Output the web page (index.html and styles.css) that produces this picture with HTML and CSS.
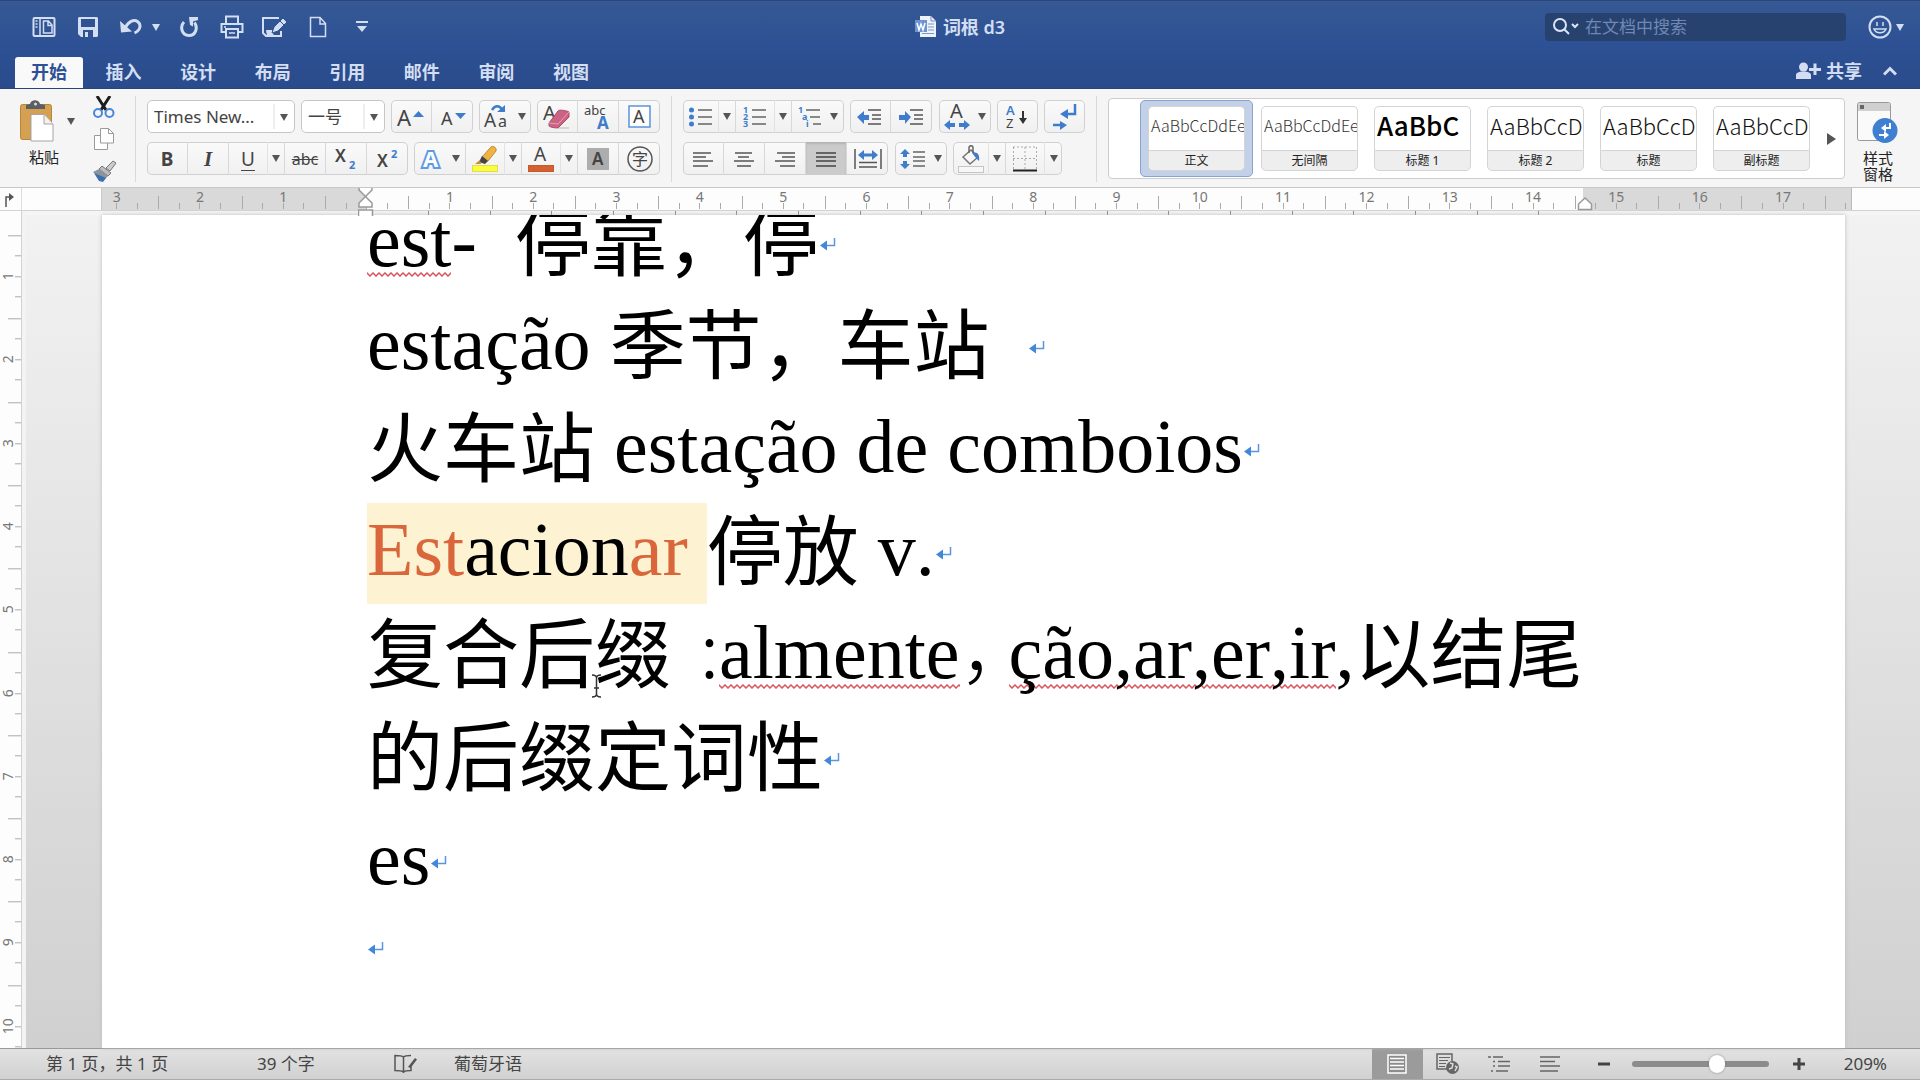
FILE: index.html
```html
<!DOCTYPE html>
<html lang="zh-CN">
<head>
<meta charset="utf-8">
<title>词根 d3</title>
<link rel="stylesheet" href="styles.css">
</head>
<body>
<svg class="defs" aria-hidden="true">
  <symbol id="dn" viewBox="0 0 8 7"><path d="M0 0h8L4 7z" fill="currentColor"/></symbol>
  <symbol id="mark" viewBox="0 0 16 14"><path d="M14.500 0V7.500H5" fill="none" stroke="#5a96de" stroke-width="1.500"/><path d="M0 7.500L7 2.500v10z" fill="#4188dc"/></symbol>
</svg>
<div class="app">
<header class="top">
  <div class="titlebar">
    <div class="quick">
      <button class="q" aria-label="侧边栏"><svg width="24" height="22" viewBox="0 0 24 22" fill="none" stroke="currentColor" stroke-width="2"><rect x="1.500" y="2" width="21" height="18" rx="1"/><path d="M8 2v18" stroke-width="1.500"/><path d="M3.500 5h2M3.500 8h2M3.500 11h2" stroke-width="1.500"/><path d="M11.500 5h5l3.500 4v8h-8.500zM16 5v4.500h4" stroke-width="1.500"/></svg></button>
      <button class="q" aria-label="保存"><svg width="22" height="22" viewBox="0 0 22 22"><path d="M2 1h18l1 1v18l-1 1H4l-3-3V2z" fill="currentColor"/><rect x="4" y="3" width="14" height="8" fill="#305292"/><rect x="6" y="14" width="10" height="7" fill="#305292"/><rect x="8" y="16" width="3" height="5" fill="currentColor"/></svg></button>
      <button class="q" aria-label="撤消"><svg width="22" height="20" viewBox="0 0 22 20" fill="none" stroke="currentColor" stroke-width="3"><path d="M0 4l1 11.500 11-1z" fill="currentColor" stroke="none"/><path d="M5 11C9 4 14 2 17.500 4.500s4 8-3 11.500"/></svg></button>
      <button class="q" aria-label="撤消选项"><svg width="8" height="7"><use href="#dn"/></svg></button>
      <button class="q" aria-label="重复"><svg width="19" height="22" viewBox="0 0 19 22" fill="none" stroke="currentColor" stroke-width="3"><path d="M4 6C0 10 1 19 9 19.500c7 0 9-8 5.500-13"/><path d="M9 1h9v3l-5 1.500v5L10 9z" fill="currentColor" stroke="none"/></svg></button>
      <button class="q" aria-label="打印"><svg width="24" height="24" viewBox="0 0 24 24" fill="none" stroke="currentColor" stroke-width="2"><path d="M6 9V1.500h12V9M5 17H1.500V9h21v8H19"/><rect x="6" y="14" width="12" height="8.500"/><path d="M9 18h6M4 12h2" stroke-width="1.500"/></svg></button>
      <button class="q" aria-label="编辑"><svg width="27" height="22" viewBox="0 0 27 22"><path d="M18 2H2v15l3 3h15v-5" fill="none" stroke="currentColor" stroke-width="2"/><path d="M5 14h6l2 6H6z" fill="currentColor"/><path d="M11 17l2-6L22 2l4 4-9 9z" fill="currentColor" stroke="#305292"/><path d="M19 5l4 4" stroke="#305292"/></svg></button>
      <button class="q" aria-label="新建"><svg width="18" height="22" viewBox="0 0 18 22" fill="none" stroke="currentColor" stroke-width="2"><path d="M1.500 1.500h9.500l5.500 6v13h-15zM11 1.500V8h5.500" stroke-width="1.500"/></svg></button>
      <button class="q" aria-label="自定义"><svg width="12" height="12" viewBox="0 0 12 12" fill="currentColor"><path d="M0 0h12v2H0zM1 5h10L6 11z"/></svg></button>
    </div>
    <h1 class="title"><svg width="22" height="22" viewBox="0 0 22 22"><path d="M5 0h11l5 5v16H5z" fill="#eef3fb"/><path d="M16 0v5h5" fill="none" stroke="#6f8dc0"/><path d="M13 8h6M13 11h6M13 14h6M7 17.500h12" stroke="#7d97c4"/><rect y="4" width="12" height="12" fill="#6f95d0"/><path d="M2 7l2 7 2-6 2 6 2-7" fill="none" stroke="#fff" stroke-width="1.500"/></svg>词根 d3</h1>
    <div class="titleright">
      <label class="search"><svg width="26" height="18" viewBox="0 0 26 18" fill="none" stroke="#dbe5f6" stroke-width="2"><circle cx="7" cy="7" r="6"/><path d="M11.500 11.500L16 16M19 6l3 3 3-3"/></svg><input type="search" placeholder="在文档中搜索" aria-label="在文档中搜索"></label>
      <button class="q smile" aria-label="反馈"><svg width="24" height="24" viewBox="0 0 24 24" fill="none" stroke="currentColor" stroke-width="2"><circle cx="12" cy="12" r="10.500"/><path d="M9 7v4M15 7v4M6 14c2 5 10 5 12 0z" stroke-width="1.500"/></svg><svg width="8" height="7"><use href="#dn"/></svg></button>
    </div>
  </div>
  <div class="tabrow">
    <nav class="tabs">
      <button class="tab on">开始</button><button class="tab">插入</button><button class="tab">设计</button><button class="tab">布局</button><button class="tab">引用</button><button class="tab">邮件</button><button class="tab">审阅</button><button class="tab">视图</button>
    </nav>
    <div class="share">
      <button class="q sharebtn"><svg width="25" height="18" viewBox="0 0 25 18" fill="currentColor"><circle cx="7.500" cy="5" r="4.500"/><path d="M0 17v-4c0-2 3-3.500 7.500-3.500S15 11 15 13v4zM17.500 1.500h3v4.500H25v3h-4.500V13h-3V9H13V6h4.500z"/></svg>共享</button>
      <button class="q" aria-label="折叠功能区"><svg width="14" height="10" viewBox="0 0 14 10" fill="none" stroke="currentColor" stroke-width="3"><path d="M1 8.500l6-6 6 6"/></svg></button>
    </div>
  </div>
</header>

<section class="ribbon">
  <div class="clip">
    <button class="paste"><svg width="34" height="42" viewBox="0 0 34 42"><rect x=".5" y="4.500" width="31" height="35" rx="2" fill="#d4a052" stroke="#b98638"/><path d="M6 9V5l4-1c1-5 9-5 10 0l5 1v4z" fill="#5b5f63"/><circle cx="15.500" cy="4" r="1.500" fill="#ddd"/><path d="M11 14.500h13l9 9.500v17H11z" fill="#fff" stroke="#a5a5a5"/><path d="M24 14.500V24h9" fill="#f1f1f1" stroke="#a5a5a5"/></svg><span>粘贴</span></button>
    <button class="parrow" aria-label="粘贴选项"><svg width="8" height="7"><use href="#dn"/></svg></button>
    <div class="clipcol">
      <button class="plain" aria-label="剪切"><svg width="22" height="22" viewBox="0 0 22 22"><path d="M4 0l9 14M17 0L8 14" stroke="#1d1d1d" stroke-width="3"/><circle cx="5" cy="17" r="4" fill="none" stroke="#4b87d6" stroke-width="2"/><circle cx="16.500" cy="17" r="4" fill="none" stroke="#4b87d6" stroke-width="2"/></svg></button>
      <button class="plain" aria-label="复制"><svg width="22" height="22" viewBox="0 0 22 22" fill="#fff" stroke="#9a9a9a"><path d="M1.500 7.500h9l4 4v10h-13z"/><path d="M7.500.5h8l5 5v9.500h-13z"/><path d="M15.500.5v5h5" fill="none"/></svg></button>
      <button class="plain" aria-label="格式刷"><svg width="24" height="22" viewBox="0 0 24 22"><path d="M13 8l7-7 3 2-6 8z" fill="#ccc" stroke="#777"/><path d="M9 6l9 7-3 3L6 9z" fill="#b9bcc0" stroke="#777"/><path d="M6 9l9 7-5 5L0 12z" fill="#8d9399"/><path d="M1 13l12 5-3 4-4-1z" fill="#3b6fb4"/></svg></button>
    </div>
  </div>
  <div class="sep"></div>
  <div class="rows font">
    <div class="row">
      <select class="combo name" aria-label="字体"><option>Times New...</option></select>
      <select class="combo size" aria-label="字号"><option>一号</option></select>
      <div class="g"><button class="b" aria-label="增大字号"><svg width="30" height="24" viewBox="0 0 30 24"><text class="t" x="1" y="21" font-size="22">A</text><path d="M17 12l5.500-6 5.500 6z" fill="#3f7dcc"/></svg></button><button class="b" aria-label="减小字号"><svg width="30" height="24" viewBox="0 0 30 24"><text class="t" x="3" y="20" font-size="18">A</text><path d="M17 8h11l-5.500 6z" fill="#3f7dcc"/></svg></button></div>
      <div class="g"><button class="b wide" aria-label="更改大小写"><svg width="26" height="28" viewBox="0 0 26 28"><text class="t" x="0" y="24" font-size="19">A</text><text class="t" x="14" y="24" font-size="16">a</text><path d="M8 7c3-5 8-5 10 0" fill="none" stroke="#3f7dcc" stroke-width="2.500"/><path d="M13 9h8V2z" fill="#3f7dcc"/></svg><svg class="da" width="8" height="7"><use href="#dn"/></svg></button></div>
      <div class="g"><button class="b" aria-label="清除格式"><svg width="30" height="28" viewBox="0 0 30 28"><text class="t" x="1" y="17" font-size="20">A</text><path d="M14 25h13" stroke="#bbb"/><path d="M7 20L16 8c1-2 10 0 11 1v5L17 24c-2 2-9 0-10-1z" fill="#cc6384" stroke="#a94a68"/><path d="M7 20l9 1L27 9" fill="none" stroke="#e6a0b6"/></svg></button><button class="b" aria-label="拼音指南"><svg width="30" height="28" viewBox="0 0 30 28"><text class="t" x="1" y="12" font-size="13">abc</text><text class="t blue bold" x="14" y="26" font-size="17">A</text></svg></button><button class="b" aria-label="字符边框"><svg width="24" height="24" viewBox="0 0 24 24"><rect x="1" y="1" width="21" height="21" fill="#fff" stroke="#5a93dd" stroke-width="1.500"/><text class="t" x="5" y="18" font-size="18">A</text></svg></button></div>
    </div>
    <div class="row">
      <div class="g"><button class="b bt bold">B</button><button class="b bt ital">I</button><button class="b bt under">U</button><button class="b arr" aria-label="下划线选项"><svg width="8" height="7"><use href="#dn"/></svg></button><button class="b strike">abc</button><button class="b" aria-label="下标"><svg width="24" height="24" viewBox="0 0 24 24"><text class="t semi" x="1" y="15" font-size="17">X</text><text class="t blue bold" x="15" y="22" font-size="11">2</text></svg></button><button class="b" aria-label="上标"><svg width="24" height="24" viewBox="0 0 24 24"><text class="t semi" x="1" y="20" font-size="17">X</text><text class="t blue bold" x="15" y="11" font-size="11">2</text></svg></button></div>
      <div class="g"><button class="b wide" aria-label="文本效果"><svg width="24" height="24" viewBox="0 0 24 24"><text x="3" y="20" font-size="22" font-weight="700" fill="#fff" stroke="#5b9be6" stroke-width="4" paint-order="stroke">A</text></svg><svg class="da" width="8" height="7"><use href="#dn"/></svg></button><button class="b main" aria-label="突出显示"><svg width="26" height="28" viewBox="0 0 26 28"><path d="M10 12l9-10c2-2 6 1 5 4l-8 10z" fill="#efb340" stroke="#b98a3a"/><path d="M10 11l6 5-3 3-6-2z" fill="#444"/><path d="M8 15l-5 4h6z" fill="#c88b3c"/><rect x=".5" y="20.500" width="25" height="6" fill="#fcfc3c" stroke="#dede50"/></svg></button><button class="b arr" aria-label="突出显示颜色"><svg width="8" height="7"><use href="#dn"/></svg></button><button class="b main" aria-label="字体颜色"><svg width="26" height="28" viewBox="0 0 26 28"><text class="t" x="6" y="16" font-size="19">A</text><rect x=".5" y="20.500" width="25" height="6" fill="#d5602f" stroke="#c05a30"/></svg></button><button class="b arr" aria-label="字体颜色选项"><svg width="8" height="7"><use href="#dn"/></svg></button><button class="b" aria-label="字符底纹"><svg width="22" height="22" viewBox="0 0 22 22"><rect width="22" height="22" fill="#adadad"/><text class="t semi" x="5" y="17" font-size="17">A</text></svg></button><button class="b" aria-label="带圈字符"><svg width="26" height="26" viewBox="0 0 26 26"><circle cx="13" cy="13" r="12" fill="none" stroke="#555" stroke-width="1.500"/><text class="t" x="5" y="19" font-size="16">字</text></svg></button></div>
    </div>
  </div>
  <div class="sep"></div>
  <div class="rows para">
    <div class="row">
      <div class="g"><button class="b m36" aria-label="项目符号"><svg width="24" height="20" viewBox="0 0 24 20"><path d="M9 3h14M9 10h14M9 17h14" stroke="#666" stroke-width="1.500"/><g fill="#3f7dcc"><circle cx="2.500" cy="3" r="2.500"/><circle cx="2.500" cy="10" r="2.500"/><circle cx="2.500" cy="17" r="2.500"/></g></svg></button><button class="b arr" aria-label="项目符号选项"><svg width="8" height="7"><use href="#dn"/></svg></button><button class="b main" aria-label="编号"><svg width="24" height="22" viewBox="0 0 24 22"><path d="M9 4h14M9 11h14M9 18h14" stroke="#666" stroke-width="1.500"/><g class="t blue bold" font-size="9"><text x="0" y="7">1</text><text x="0" y="14">2</text><text x="0" y="21">3</text></g></svg></button><button class="b arr" aria-label="编号选项"><svg width="8" height="7"><use href="#dn"/></svg></button><button class="b wide" aria-label="多级列表"><svg width="24" height="22" viewBox="0 0 24 22"><path d="M8 4h14M12 11h10M15 18h8" stroke="#666" stroke-width="1.500"/><g class="t blue bold" font-size="9"><text x="0" y="7">1</text><text x="4" y="14">a</text><text x="8" y="21">i</text></g></svg><svg class="da" width="8" height="7"><use href="#dn"/></svg></button></div>
      <div class="g"><button class="b" aria-label="减少缩进"><svg width="26" height="20" viewBox="0 0 26 20"><path d="M11 3h13M15 8h9M15 12h9M11 17h13" stroke="#555" stroke-width="1.500"/><path d="M0 10l7-6v4h5v5H7v4z" fill="#3f7dcc"/></svg></button><button class="b" aria-label="增加缩进"><svg width="26" height="20" viewBox="0 0 26 20"><path d="M11 3h13M15 8h9M15 12h9M11 17h13" stroke="#555" stroke-width="1.500"/><path d="M12 10L6 4v4H0v5h6v4z" fill="#3f7dcc"/></svg></button></div>
      <div class="g"><button class="b wide" aria-label="中文版式"><svg width="26" height="28" viewBox="0 0 26 28"><text class="t" x="6" y="15" font-size="20">A</text><path d="M0 22l6-5v3h5v4H6v3zM26 22l-6-5v3h-5v4h5v3z" fill="#3f7dcc"/></svg><svg class="da" width="8" height="7"><use href="#dn"/></svg></button></div>
      <div class="g"><button class="b" aria-label="排序"><svg width="24" height="26" viewBox="0 0 24 26"><text class="t blue semi" x="1" y="11" font-size="13">A</text><text class="t" x="1" y="24" font-size="13">Z</text><path d="M18 7v10" stroke="#333" stroke-width="2"/><path d="M14 14h8l-4 6z" fill="#333"/></svg></button></div>
      <div class="g"><button class="b" aria-label="显示编辑标记"><svg width="26" height="28" viewBox="0 0 26 28"><path d="M23 1v10H14M1 22h10" fill="none" stroke="#3f7dcc" stroke-width="2.500"/><path d="M8 11l8-5v10zM15 22l-7-4v9z" fill="#3f7dcc"/></svg></button></div>
    </div>
    <div class="row fit">
      <div class="g"><button class="b" aria-label="左对齐"><svg width="22" height="16" viewBox="0 0 22 16" stroke="#555" stroke-width="1.500"><path d="M1 2h18M1 6h13M1 10h20M1 15h15"/></svg></button><button class="b" aria-label="居中"><svg width="22" height="16" viewBox="0 0 22 16" stroke="#555" stroke-width="1.500"><path d="M2 2h17M5 6h11M1 10h20M4 15h14"/></svg></button><button class="b" aria-label="右对齐"><svg width="22" height="16" viewBox="0 0 22 16" stroke="#555" stroke-width="1.500"><path d="M3 2h18M8 6h13M1 10h20M6 15h15"/></svg></button><button class="b on" aria-label="两端对齐"><svg width="22" height="16" viewBox="0 0 22 16" stroke="#444" stroke-width="1.500"><path d="M1 2h20M1 6h20M1 10h20M1 15h20"/></svg></button><button class="b" aria-label="分散对齐"><svg width="28" height="20" viewBox="0 0 28 20"><path d="M1 0v20M27 0v20M5 13.500h18M5 18h18" stroke="#555" stroke-width="1.500"/><path d="M4 6l6-5v3.500h8V1l6 5-6 5V7.500h-8V11z" fill="#3f7dcc"/></svg></button></div>
      <div class="g"><button class="b wide" aria-label="行距"><svg width="26" height="20" viewBox="0 0 26 20"><path d="M13 3h12M13 8h12M13 12h12M13 17h12" stroke="#666" stroke-width="1.500"/><path d="M5 0l5 5H7v3H3V5H0zM5 20l5-5H7v-3H3v3H0z" fill="#3f7dcc"/></svg><svg class="da" width="8" height="7"><use href="#dn"/></svg></button></div>
      <div class="g"><button class="b m36" aria-label="底纹"><svg width="26" height="28" viewBox="0 0 26 28"><path d="M5 12l8-7 7 7-8 7z" fill="#f8f8f8" stroke="#777" stroke-width="1.500"/><path d="M11 8V3c0-3 4-3 4 0v5" fill="none" stroke="#666" stroke-width="1.500"/><path d="M14 8c5-2 8 1 7 8l-3-3z" fill="#3f7dcc"/><rect x=".5" y="21.500" width="25" height="6" fill="#f7f7f7" stroke="#c5c5c5"/></svg></button><button class="b arr" aria-label="底纹选项"><svg width="8" height="7"><use href="#dn"/></svg></button><button class="b main" aria-label="边框"><svg width="26" height="26" viewBox="0 0 26 26"><path d="M1 1h24M1 12.500h24M1.500 1v23M13 1v23M24.500 1v23" stroke="#aaa" stroke-dasharray="2 2"/><path d="M1 24.500h24" stroke="#222" stroke-width="2"/></svg></button><button class="b arr" aria-label="边框选项"><svg width="8" height="7"><use href="#dn"/></svg></button></div>
    </div>
  </div>
  <div class="sep"></div>
  <div class="gallery">
    <div class="styles">
      <button class="st on"><span class="pv p16">AaBbCcDdEe</span><span class="nm">正文</span></button>
      <button class="st"><span class="pv p16">AaBbCcDdEe</span><span class="nm">无间隔</span></button>
      <button class="st"><span class="pv p26">AaBbC</span><span class="nm">标题 1</span></button>
      <button class="st"><span class="pv p22">AaBbCcDd</span><span class="nm">标题 2</span></button>
      <button class="st"><span class="pv p22">AaBbCcDd</span><span class="nm">标题</span></button>
      <button class="st"><span class="pv p22">AaBbCcDd</span><span class="nm">副标题</span></button>
    </div>
    <button class="plain" aria-label="更多样式"><svg width="9" height="12" viewBox="0 0 9 12"><path d="M0 0l9 6-9 6z" fill="#555"/></svg></button>
  </div>
  <button class="pane"><svg width="42" height="42" viewBox="0 0 42 42"><rect x=".5" y=".5" width="33" height="38" rx="2" fill="#fafafa" stroke="#999"/><path d="M1 1h32v8H1z" fill="#d0d0d0"/><rect x="3" y="3" width="4" height="4" fill="#666"/><circle cx="28" cy="28.500" r="12.500" fill="#3f7fd2"/><path d="M33 21v5h-6M22 33h6" fill="none" stroke="#fff" stroke-width="2"/><path d="M24 26l5-4v8zM32 33l-5-4v8z" fill="#fff"/></svg><span>样式<br>窗格</span></button>
</section>

<div class="hruler">
  <div class="corner"><svg width="10" height="14" viewBox="0 0 10 14"><path d="M2 14V4h4" fill="none" stroke="#555" stroke-width="1.500"/><path d="M5 0l5 4-5 4z" fill="#555"/></svg></div>
  <div class="track">
    <div class="units"><span class="first">3</span><span>2</span><span>1</span><span></span><span>1</span><span>2</span><span>3</span><span>4</span><span>5</span><span>6</span><span>7</span><span>8</span><span>9</span><span>10</span><span>11</span><span>12</span><span>13</span><span>14</span><span>15</span><span>16</span><span>17</span><span class="last"></span></div>
    <svg class="indent" width="16" height="28" viewBox="0 0 16 28"><path d="M1 0v2l6.500 6.500L14 2V0M7.500 8.500L14 15v4H1v-4z" fill="#fff" stroke="#999" stroke-width="1.500"/><path d="M.5 28v-6h14v6" fill="#fff" stroke="#999" stroke-width="1.500"/></svg>
    <svg class="rindent" width="16" height="14" viewBox="0 0 16 14"><path d="M8 1l6.500 6v5.500h-13V7z" fill="#fff" stroke="#999" stroke-width="1.500"/></svg>
  </div>
</div>

<main class="work">
  <div class="vruler"><span>1</span><span>2</span><span>3</span><span>4</span><span>5</span><span>6</span><span>7</span><span>8</span><span>9</span><span>10</span></div>
  <div class="canvas">
    <div class="stops"><div></div></div>
    <article class="page">
      <div class="doc">
        <p><span class="err">est</span>-&nbsp; <span class="zh">停靠，停</span><svg class="mk"><use href="#mark"/></svg></p>
        <p>estação <span class="zh">季节，车站</span>&nbsp; <svg class="mk"><use href="#mark"/></svg></p>
        <p><span class="zh">火车站</span> estação de comboios<svg class="mk"><use href="#mark"/></svg></p>
        <p><span class="hl"><b>Est</b>acion<b>ar</b>&nbsp;</span><span class="zh">停放</span> v.<svg class="mk"><use href="#mark"/></svg></p>
        <p><span class="zh">复合后缀</span> <span class="colon">:</span><span class="err">almente</span><span class="half">，</span><span class="err">ção,ar,er,ir</span>,<span class="zh">以结尾的后缀定词性</span><svg class="mk"><use href="#mark"/></svg></p>
        <p>es<svg class="mk"><use href="#mark"/></svg></p>
        <p class="end"><svg class="mk"><use href="#mark"/></svg></p>
      </div>
      <svg class="ibeam" width="9" height="24" viewBox="0 0 9 24" fill="none"><path d="M0 1c3 0 4.500 1 4.500 3v16c0 2-1.500 3-4.500 3M9 1C6 1 4.500 2 4.500 4v16c0 2 1.500 3 4.500 3M2 14h5" stroke="#333" stroke-width="1.500"/></svg>
    </article>
  </div>
</main>

<footer class="status">
  <div class="info">
    <span class="pages">第 1 页，共 1 页</span>
    <span class="words">39 个字</span>
    <button class="plain" aria-label="校对"><svg width="24" height="20" viewBox="0 0 24 20" fill="none" stroke="#555" stroke-width="1.500"><path d="M9.500 3v16M9.500 3C8 1.500 5 1.500 1 1.500v15c4 0 7 0 8.500 1.500C11 16.500 13 16.500 17 16.500V12M9.500 3C11 1.500 13 1.500 17 1.500"/><path d="M14 13l7-9 2 1.500-6.500 8.500z" fill="#555" stroke="none"/></svg></button>
    <span class="langname">葡萄牙语</span>
  </div>
  <div class="views">
    <button class="view on" aria-label="页面视图"><svg width="20" height="20" viewBox="0 0 20 20"><rect x="1" y="1" width="18" height="18" fill="#8c8c8c" stroke="#fff" stroke-width="1.500"/><path d="M3 4.500h14M3 8h14M3 11.500h14M3 15h14" stroke="#fff" stroke-width="1.500"/></svg></button>
    <button class="view" aria-label="Web 版式"><svg width="24" height="22" viewBox="0 0 24 22"><path d="M11 16H1V1h15v7" fill="none" stroke="#666" stroke-width="1.500"/><path d="M3 4.500h11M3 7.500h9M3 10.500h7M3 13.500h6" stroke="#666"/><circle cx="16.500" cy="14.500" r="6.500" fill="#666"/><path d="M14 10l3 1-1 4-3 1M19 13l2 1-2 4" fill="none" stroke="#ddd" stroke-width="1.500"/></svg></button>
    <button class="view" aria-label="大纲视图"><svg width="22" height="18" viewBox="0 0 22 18" stroke="#666" stroke-width="1.500"><path d="M0 2h3M5 2h10M5 6.500h2M10 6.500h12M5 11h2M10 11h12M3 16h2M8 16h12"/></svg></button>
    <button class="view" aria-label="草稿视图"><svg width="20" height="18" viewBox="0 0 20 18" stroke="#666" stroke-width="1.500"><path d="M0 2h20M0 6.500h15M0 11h20M0 16h18"/></svg></button>
  </div>
  <div class="zoom">
    <button class="plain" aria-label="缩小"><svg width="12" height="12"><path d="M0 6h12" stroke="#444" stroke-width="3"/></svg></button>
    <input type="range" min="0" max="100" value="64" aria-label="缩放">
    <button class="plain" aria-label="放大"><svg width="12" height="12"><path d="M0 6h12M6 0v12" stroke="#444" stroke-width="3"/></svg></button>
    <span class="pct">209%</span>
  </div>
</footer>
</div>
</body>
</html>
```
FILE: styles.css
```css
* { box-sizing: border-box; }
body {
  margin: 0;
  font-family: "Noto Sans", "Noto Sans CJK SC", sans-serif;
  color: #333;
}
button {
  margin: 0;
  padding: 0;
  border: 0;
  background: none;
  font: inherit;
  color: inherit;
}
svg { display: block; flex: none; }
.defs { position: absolute; width: 0; height: 0; }
.app { display: flex; flex-direction: column; height: 100vh; overflow: hidden; }

/* Title bar and tabs */
.top {
  background: linear-gradient(#365894, #2d5194 50%, #2a4b8b);
  border-top: 1px solid #2b4577;
  border-bottom: 1px solid #27437b;
  color: #d3def2;
}
.titlebar {
  display: grid;
  grid-template-columns: 1fr auto 1fr;
  height: 56px;
  align-items: center;
  padding: 0 16px 4px 32px;
}
.q { display: flex; align-items: center; color: #d3def2; }
.quick { display: flex; align-items: center; }
.quick .q { margin-right: 21px; }
.quick .q:nth-child(3) { margin-right: 10px; }
.quick .q:nth-child(4) { margin-right: 20px; }
.quick .q:nth-child(6) { margin-right: 17px; }
.quick .q:nth-child(8) { margin-right: 29px; }
.title {
  display: flex;
  align-items: center;
  gap: 6px;
  margin: 0 16px 0 0;
  font-size: 18px;
  font-weight: 600;
  line-height: 24px;
}
.titleright { display: flex; justify-content: flex-end; gap: 22px; }
.search {
  display: flex;
  align-items: center;
  gap: 6px;
  width: 301px;
  height: 28px;
  padding-left: 8px;
  border-radius: 4px;
  background: #27426f;
}
.search input {
  flex: 1;
  min-width: 0;
  padding: 0;
  border: 0;
  outline: 0;
  background: none;
  font: 17px/24px "Noto Sans", "Noto Sans CJK SC", sans-serif;
  color: #d3def2;
}
.search input::placeholder { color: #7088b4; }
.smile { gap: 4px; }
.tabrow { display: flex; justify-content: space-between; height: 31px; padding: 0 23px 0 15px; }
.tabs { display: flex; justify-content: space-between; width: 590px; }
.tab {
  width: 68px;
  border-radius: 3px 3px 0 0;
  font-size: 18px;
  font-weight: 600;
  line-height: 28px;
  padding-bottom: 2px;
}
.tab.on { background: #f9f9f9; color: #2d5194; }
.share { display: flex; gap: 21px; padding-bottom: 4px; }
.sharebtn { gap: 5px; font-size: 18px; font-weight: 700; line-height: 24px; }

/* Ribbon */
.ribbon {
  display: flex;
  height: 99px;
  padding: 7px 21px 5px 20px;
  background: #f5f5f5;
  border-bottom: 1px solid #c8c8c8;
}
.sep { flex: none; width: 1px; margin: 0 11px; background: #d9d9d9; }
.clip { display: flex; width: 104px; }
.paste, .pane { display: flex; flex-direction: column; font-size: 15px; line-height: 16px; color: #222; }
.paste { align-items: flex-end; width: 39px; padding-top: 4px; }
.paste svg { margin-right: 5px; }
.paste span { padding-top: 7px; white-space: nowrap; }
.parrow { align-self: flex-start; width: 28px; padding: 22px 0 0 8px; color: #555; }
.clipcol { display: flex; flex-direction: column; gap: 10px; padding-left: 6px; }
.plain { display: flex; align-items: center; }
.rows { display: flex; flex: none; flex-direction: column; gap: 9px; padding-top: 4px; }
.font { width: 513px; }
.para { width: 402px; }
.row { display: flex; justify-content: space-between; }
.row.fit { width: 379px; }
.g {
  display: flex;
  height: 33px;
  border-radius: 5px;
  background: linear-gradient(#fafafa, #f0f0f0);
  box-shadow: inset 0 0 0 1px #d0d0d0;
  overflow: hidden;
}
.b {
  display: flex;
  align-items: center;
  justify-content: center;
  width: 41px;
  border-right: 1px solid #d8d8d8;
  color: #444;
}
.b:last-child { border-right: 0; }
.b.on { background: #cbcbcb; box-shadow: inset 0 2px 2px #b5b5b5; }
.main, .under { width: 39px; }
.m36 { width: 36px; }
.main, .m36, .under { border-color: #e2e2e2; }
.arr { width: 17px; color: #555; }
.wide { width: 52px; gap: 8px; }
.da { color: #555; }
.bt { font-size: 19px; line-height: 24px; }
.bold { font-weight: 700; }
.ital { font-family: "Liberation Serif", serif; font-size: 21px; font-style: italic; font-weight: 700; }
.under { text-decoration: underline; text-underline-offset: 4px; text-decoration-thickness: 1px; }
.strike { font-size: 16px; text-decoration: line-through; }
.t { fill: #444; }
.t.blue { fill: #3f7dcc; }
.t.semi { font-weight: 600; }
.combo {
  appearance: none;
  height: 33px;
  padding: 0 22px 0 6px;
  border: 1px solid #c6c6c6;
  border-radius: 5px;
  background: #fff url("data:image/svg+xml,%3Csvg xmlns='http://www.w3.org/2000/svg' width='21' height='31'%3E%3Cpath d='M1 3v25' stroke='%23ddd'/%3E%3Cpath d='M7 13h8l-4 7z' fill='%23555'/%3E%3C/svg%3E") right center no-repeat;
  font: 17px/24px "Noto Sans", "Noto Sans CJK SC", sans-serif;
  color: #444;
}
.name { width: 148px; }
.size { width: 84px; }
.gallery {
  display: flex;
  flex: 1;
  min-width: 0;
  height: 81px;
  margin-top: 2px;
  padding: 0 8px 0 31px;
  justify-content: space-between;
  border: 1px solid #cdcdcd;
  border-radius: 4px;
  background: #fff;
}
.styles { display: flex; align-items: center; }
.st {
  display: flex;
  flex-direction: column;
  width: 113px;
  height: 77px;
  padding: 5px 7px;
  border: 1px solid transparent;
  border-radius: 5px;
}
.st.on { background: #c3d1e8; border-color: #8aa3cc; }
.pv, .nm { width: 97px; border: 1px solid #d4d4d4; overflow: hidden; white-space: nowrap; }
.pv {
  height: 44px;
  padding: 0 2px;
  border-bottom: 0;
  border-radius: 5px 5px 0 0;
  background: #fff;
  font-family: "Noto Sans CJK SC", sans-serif;
  font-weight: 300;
  line-height: 36px;
  text-align: left;
  color: #111;
}
.p16 { font-size: 16px; color: #333; }
.p22 { font-size: 22px; }
.p26 { font-size: 26px; font-weight: 500; color: #000; }
.nm { height: 21px; border-radius: 0 0 5px 5px; background: #eee; font-size: 12px; line-height: 20px; text-align: center; color: #222; }
.pane { align-items: center; width: 42px; margin-left: 12px; padding-top: 6px; }
.pane span { padding-top: 6px; }

/* Horizontal ruler */
.hruler { display: flex; height: 23px; border-bottom: 1px solid #d2d2d2; background: #fdfdfd; }
.corner { width: 22px; padding: 5px 0 0 4px; border-right: 1px solid #ddd; }
.track {
  position: relative;
  flex: 1;
  min-width: 0;
  overflow: visible;
  background: linear-gradient(90deg, transparent 79px, #bbb 79px, #d9d9d9 80px, #d9d9d9 344px, #fdfdfd 344px, #fdfdfd 1561px, #d9d9d9 1561px, #d9d9d9 1829px, #bbb 1829px, #bbb 1830px, #fdfdfd 1830px);
}
.units { display: grid; grid-template-columns: repeat(22, 1fr); width: 1833px; height: 22px; margin-left: 53px; }
.units span {
  font-size: 14px;
  line-height: 17px;
  text-align: center;
  color: #777;
  background:
    linear-gradient(#aaa, #aaa) 0 8px / 1px 13px no-repeat,
    linear-gradient(#aaa, #aaa) 25% 15px / 1px 6px no-repeat,
    linear-gradient(#aaa, #aaa) 50% 15px / 1px 6px no-repeat,
    linear-gradient(#aaa, #aaa) 75% 15px / 1px 6px no-repeat;
}
.units .first { background: linear-gradient(#aaa, #aaa) 50% 15px / 1px 6px no-repeat, linear-gradient(#aaa, #aaa) 75% 15px / 1px 6px no-repeat; }
.units .last { background: linear-gradient(#aaa, #aaa) 0 8px / 1px 13px no-repeat, linear-gradient(#aaa, #aaa) 25% 15px / 1px 6px no-repeat; }
.indent { position: absolute; left: 336px; top: 0; z-index: 2; }
.rindent { position: absolute; left: 1555px; top: 9px; }

/* Document area */
.work { display: flex; flex: 1; min-height: 0; }
.vruler {
  display: grid;
  flex: none;
  grid-template-rows: repeat(10, 1fr);
  width: 22px;
  height: 857px;
  padding-top: 24px;
  background: #fdfdfd;
  border-right: 1px solid #d2d2d2;
}
.vruler span {
  writing-mode: vertical-rl;
  transform: rotate(180deg);
  padding-right: 1px;
  font-size: 14px;
  line-height: 14px;
  text-align: center;
  color: #777;
  background:
    linear-gradient(#aaa, #aaa) 0 100% / 13px 1px no-repeat,
    linear-gradient(#aaa, #aaa) 0 25% / 6px 1px no-repeat,
    linear-gradient(#aaa, #aaa) 0 50% / 6px 1px no-repeat,
    linear-gradient(#aaa, #aaa) 0 75% / 6px 1px no-repeat;
}
.canvas { display: flex; flex: 1; min-width: 0; flex-direction: column; border-left: 4px solid #f3f3f3; background: linear-gradient(#f2f2f2, #d0d0d0); }
.stops { height: 4px; padding-left: 402px; background: #f5f5f5; }
.stops div { width: 1172px; height: 4px; background: repeating-linear-gradient(90deg, #888 0, #888 1px, transparent 1px, transparent calc(100% / 19)); }
.page {
  position: relative;
  flex: 1;
  margin: 0 75px 0 76px;
  padding: 0 259px 0 265px;
  background: #fff;
  box-shadow: 0 0 4px #bbb;
  overflow: hidden;
}
.doc { margin-top: -26px; font: 76px/103px "Liberation Serif", "Noto Sans CJK SC", serif; font-kerning: none; color: #000; }
.doc p { margin: 0; }
.doc b { font-weight: inherit; color: #d9673b; }
.zh { vertical-align: -4px; line-height: 95px; }
.hl { padding: 4px 0 13px; background: #fdf3d3; }
.err {
  background: url("data:image/svg+xml,%3Csvg xmlns='http://www.w3.org/2000/svg' width='6' height='5'%3E%3Cpath d='M-1 0l4 4 4-4' fill='none' stroke='%23d8545c' stroke-width='1.5'/%3E%3C/svg%3E") left bottom 5px repeat-x;
}
.colon { padding-left: 10px; font-family: "Noto Sans CJK SC", sans-serif; font-weight: 300; line-height: 60px; }
.half { padding-right: 11px; font-feature-settings: "halt"; font-weight: 300; }
.mk { display: inline; width: 16px; height: 14px; margin-left: 1px; vertical-align: 14px; }
.doc .end { line-height: 69px; }
.ibeam { position: absolute; left: 490px; top: 459px; }

/* Status bar */
.status {
  display: flex;
  flex: none;
  height: 32px;
  border-top: 1px solid #999;
  border-bottom: 1px solid #aaa;
  background: linear-gradient(#e2e2e2, #d1d1d1);
  font-size: 17px;
  line-height: 30px;
  color: #444;
}
.info { display: flex; flex: 1; padding-left: 46px; }
.pages { width: 211px; }
.words { width: 137px; }
.langname { padding-left: 36px; }
.views { display: flex; }
.view { display: flex; align-items: center; justify-content: center; width: 51px; }
.view.on { background: #9b9b9b; }
.zoom { display: flex; align-items: center; gap: 24px; padding: 0 33px 0 22px; }
.zoom input { appearance: none; width: 137px; height: 20px; margin: 0 0 0 -2px; background: none; }
.zoom input::-webkit-slider-runnable-track { height: 6px; border-radius: 3px; background: #8c8c8c; }
.zoom input::-webkit-slider-thumb { appearance: none; width: 16px; height: 18px; margin-top: -6px; border-radius: 8px; background: #fff; box-shadow: 0 0 2px #777; }
.pct { padding-left: 15px; }
```
